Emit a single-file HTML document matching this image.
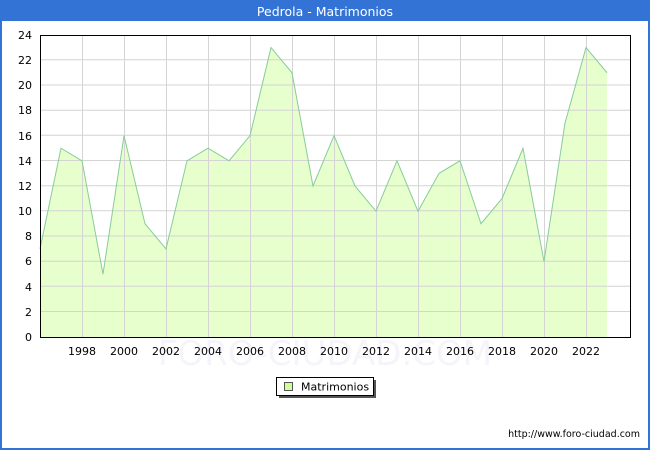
<!DOCTYPE html>
<html><head><style>
body{margin:0;width:650px;height:450px;overflow:hidden;background:#fff;font-family:"DejaVu Sans","Liberation Sans",sans-serif}
</style></head><body>
<svg width="650" height="450" xmlns="http://www.w3.org/2000/svg" font-family="DejaVu Sans, Liberation Sans, sans-serif">
<rect x="0" y="0" width="650" height="450" fill="#3473D6"/>
<rect x="2" y="21" width="646" height="427" fill="#fff"/>
<text x="325" y="16" fill="#fff" font-size="12.5" text-anchor="middle">Pedrola - Matrimonios</text>
<text x="325" y="365" fill="#f4f4fa" font-size="34" text-anchor="middle">FORO-CIUDAD.COM</text>
<polygon fill="#E6FFCC" points="40,337 40,248.9 61,148.25 82,160.8 103,274.1 124,135.7 145,223.75 166,248.9 187,160.8 208,148.25 229,160.8 250,135.7 271,47.6 292,72.75 313,186 334,135.7 355,186 376,211.2 397,160.8 418,211.2 439,173.4 460,160.8 481,223.75 502,198.6 523,148.25 544,261.5 565,123.1 586,47.6 607,72.75 607,337"/>
<g stroke="#d4d4d4" stroke-width="1">
<path d="M40 311.5H630M40 286.3H630M40 261.2H630M40 236H630M40 210.8H630M40 185.7H630M40 160.5H630M40 135.3H630M40 110.2H630M40 85H630M40 59.8H630"/>
<path d="M82.5 35V337M124.5 35V337M166.5 35V337M208.5 35V337M250.5 35V337M292.5 35V337M334.5 35V337M376.5 35V337M418.5 35V337M460.5 35V337M502.5 35V337M544.5 35V337M586.5 35V337"/>
</g>
<polyline fill="none" stroke="#88CC99" stroke-width="1" points="40,248.9 61,148.25 82,160.8 103,274.1 124,135.7 145,223.75 166,248.9 187,160.8 208,148.25 229,160.8 250,135.7 271,47.6 292,72.75 313,186 334,135.7 355,186 376,211.2 397,160.8 418,211.2 439,173.4 460,160.8 481,223.75 502,198.6 523,148.25 544,261.5 565,123.1 586,47.6 607,72.75"/>
<rect x="40.5" y="35.5" width="590" height="302" fill="none" stroke="#000" stroke-width="1"/>
<g font-size="11" fill="#000" text-anchor="end">
<text x="32" y="341">0</text><text x="32" y="316">2</text><text x="32" y="291">4</text><text x="32" y="265">6</text><text x="32" y="240">8</text><text x="32" y="215">10</text><text x="32" y="190">12</text><text x="32" y="165">14</text><text x="32" y="140">16</text><text x="32" y="114">18</text><text x="32" y="89">20</text><text x="32" y="64">22</text><text x="32" y="39">24</text>
</g>
<g font-size="11" fill="#000" text-anchor="middle">
<text x="82" y="355">1998</text><text x="124" y="355">2000</text><text x="166" y="355">2002</text><text x="208" y="355">2004</text><text x="250" y="355">2006</text><text x="292" y="355">2008</text><text x="334" y="355">2010</text><text x="376" y="355">2012</text><text x="418" y="355">2014</text><text x="460" y="355">2016</text><text x="502" y="355">2018</text><text x="544" y="355">2020</text><text x="586" y="355">2022</text>
</g>
<rect x="279" y="380" width="97" height="18" fill="#555"/>
<rect x="276.5" y="377.5" width="97" height="18" fill="#fff" stroke="#000"/>
<rect x="284.5" y="382.5" width="8" height="8" fill="#ccff99" stroke="#555"/>
<text x="301" y="390.5" font-size="11" fill="#000">Matrimonios</text>
<text x="640" y="437" font-size="9.5" fill="#000" text-anchor="end">http://www.foro-ciudad.com</text>
</svg>
</body></html>
